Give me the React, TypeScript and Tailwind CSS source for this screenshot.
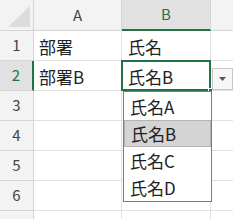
import React from 'react';

const font = { fontFamily: '"Noto Sans CJK JP", "Noto Sans", sans-serif' };

const rows = [
  { n: 1, a: '部署', b: '氏名' },
  { n: 2, a: '部署B', b: '氏名B' },
  { n: 3, a: '', b: '' },
  { n: 4, a: '', b: '' },
  { n: 5, a: '', b: '' },
  { n: 6, a: '', b: '' },
  { n: 7, a: '', b: '' },
];

const options = ['氏名A', '氏名B', '氏名C', '氏名D'];

export default function App() {
  return (
    <div className="relative w-[233px] h-[219px] overflow-hidden bg-white" style={font}>
      <div className="grid grid-cols-[34px_88px_89px_40px] grid-rows-[31px_repeat(7,30px)]">
        {/* header row */}
        <div className="flex items-end justify-end bg-[#f3f3f3] border-r border-b border-[#d4d4d4] pr-[2px] pb-[2px]">
          <svg width="23" height="22" viewBox="0 0 23 22">
            <polygon points="22,0 22,21 0,21" fill="#dcdcdc" />
          </svg>
        </div>
        <div className="flex items-center justify-center bg-[#f3f3f3] border-r border-b border-[#d4d4d4] text-[15px] text-[#444]">A</div>
        <div className="flex items-center justify-center bg-[#e1e1e1] border-r border-b-2 border-b-[#217346] border-r-[#d4d4d4] text-[15px] text-[#217346]">B</div>
        <div className="bg-[#f3f3f3] border-b border-[#d4d4d4]" />

        {rows.map((r) => (
          <React.Fragment key={r.n}>
            <div
              className={`flex items-center justify-center text-[15px] border-b border-[#d4d4d4] ${
                r.n === 2
                  ? 'bg-[#e1e1e1] border-r-2 border-r-[#217346] text-[#217346]'
                  : 'bg-[#f3f3f3] border-r border-r-[#d4d4d4] text-[#444]'
              }`}
            >
              {r.n < 7 ? r.n : ''}
            </div>
            <div className="flex items-center pl-[5px] pt-[2px] border-r border-b border-[#e1e1e1] text-[17px] text-[#222]">{r.a}</div>
            <div className="relative flex items-center pl-[6px] pt-[2px] border-r border-b border-[#e1e1e1] text-[17px] text-[#222]">
              {r.b}
              {r.n === 2 && (
                <div className="absolute left-[-1px] top-[-1px] right-[-1px] bottom-[-1px] border-2 border-[#217346]">
                  <div className="absolute right-[-4px] bottom-[-4px] w-[5px] h-[5px] bg-[#217346] border border-white" />
                </div>
              )}
            </div>
            <div className="border-b border-[#e1e1e1]" />
          </React.Fragment>
        ))}
      </div>

      {/* dropdown arrow button */}
      <div className="absolute left-[212px] top-[68px] w-[21px] h-[22px] flex items-center justify-center bg-[#f7f7f7] border border-[#c8c8c8]">
        <svg width="7" height="4" viewBox="0 0 7 4">
          <polygon points="0,0 7,0 3.5,4" fill="#555" />
        </svg>
      </div>

      {/* dropdown list */}
      <div className="absolute left-[123px] top-[91px] w-[89px] h-[111px] bg-white border border-[#7a7a7a] pt-px">
        {options.map((o) => (
          <div
            key={o}
            className={`h-[27px] flex items-center pl-[6px] text-[17px] text-[#222] ${
              o === '氏名B' ? 'bg-[#d4d4d4] border border-[#b4b4b4] pl-[5px]' : ''
            }`}
          >
            {o}
          </div>
        ))}
      </div>
    </div>
  );
}
